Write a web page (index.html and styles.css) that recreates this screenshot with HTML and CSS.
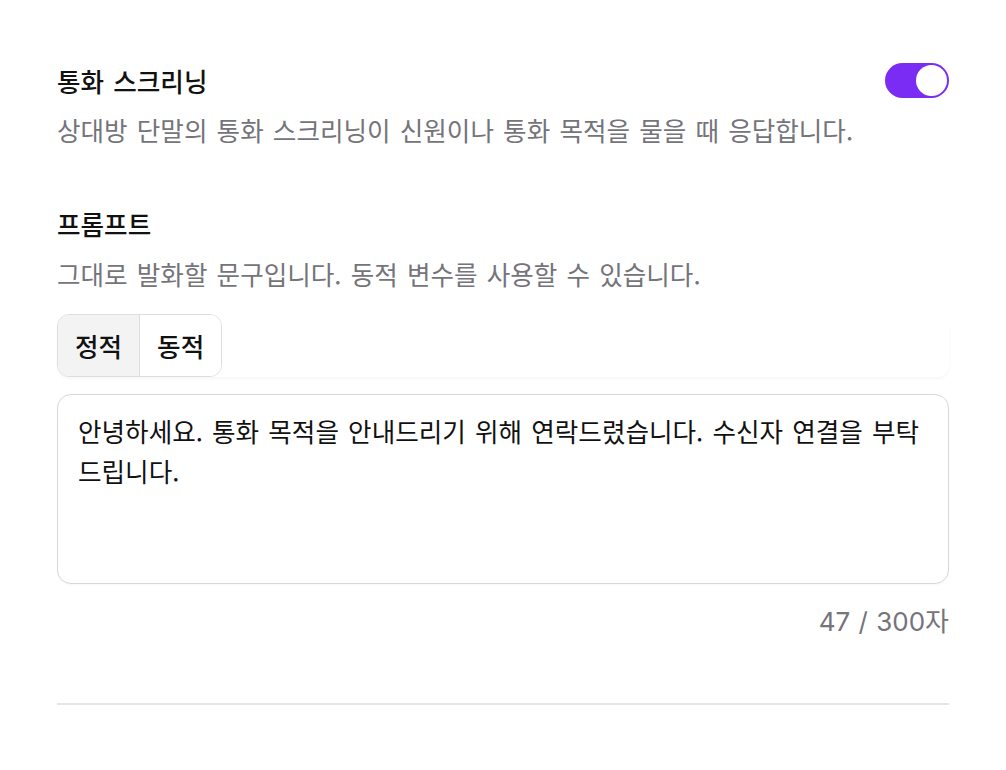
FILE: index.html
```html
<!DOCTYPE html>
<html lang="ko">
<head>
<meta charset="utf-8">
<title>통화 스크리닝</title>
<link rel="stylesheet" href="styles.css">
</head>
<body>
<main class="page">
  <section class="setting">
    <div class="setting-head">
      <h2 class="setting-title">통화 스크리닝</h2>
      <button class="toggle is-on" type="button" aria-pressed="true" aria-label="통화 스크리닝"><span class="toggle-knob"></span></button>
    </div>
    <p class="setting-desc">상대방 단말의 통화 스크리닝이 신원이나 통화 목적을 물을 때 응답합니다.</p>
  </section>

  <section class="prompt">
    <h3 class="prompt-title">프롬프트</h3>
    <p class="prompt-desc">그대로 발화할 문구입니다. 동적 변수를 사용할 수 있습니다.</p>
    <div class="mode-bar">
      <div class="segmented">
        <button class="segment is-active" type="button">정적</button>
        <button class="segment" type="button">동적</button>
      </div>
    </div>
    <textarea class="prompt-input" rows="4">안녕하세요. 통화 목적을 안내드리기 위해 연락드렸습니다. 수신자 연결을 부탁드립니다.</textarea>
    <div class="counter">47 / 300자</div>
  </section>
  <hr class="divider">
</main>
</body>
</html>
```

FILE: styles.css
```css
* { box-sizing: border-box; }

html, body {
  margin: 0;
  background: #ffffff;
}

body {
  font-family: "Noto Sans CJK KR", "Noto Sans", sans-serif;
  color: #111111;
  font-size: 25.6px;
  word-spacing: 2px;
}

.page {
  padding: 63px 57px 0 57px;
}

.setting-head {
  display: flex;
  align-items: center;
  justify-content: space-between;
  height: 35px;
}

.setting-title,
.prompt-title {
  margin: 0;
  font-size: 25.6px;
  font-weight: 500;
  line-height: 34px;
}

.setting-desc,
.prompt-desc {
  margin: 0;
  font-size: 25.6px;
  line-height: 34px;
  color: #74747a;
}

.setting-desc {
  margin-top: 15px;
}

.toggle {
  width: 64px;
  height: 35px;
  border: none;
  padding: 2px;
  border-radius: 18px;
  background: #7b2cf4;
  display: flex;
  align-items: center;
  justify-content: flex-end;
  cursor: pointer;
}

.toggle-knob {
  width: 31px;
  height: 31px;
  border-radius: 50%;
  background: #ffffff;
}

.prompt {
  margin-top: 60px;
}

.prompt-desc {
  margin-top: 16px;
}

.mode-bar {
  margin-top: 23px;
  border-radius: 12px;
  box-shadow: 0 2px 3px rgba(0, 0, 0, 0.035);
  display: flex;
}

.segmented {
  display: flex;
  border: 1.5px solid #dedede;
  border-radius: 12px;
  overflow: hidden;
}

.segment {
  font-family: inherit;
  font-size: 25.6px;
  font-weight: 500;
  line-height: 33px;
  padding: 14px 17px;
  border: none;
  background: #ffffff;
  color: #111111;
  cursor: pointer;
}

.segment + .segment {
  border-left: 1.5px solid #dedede;
}

.segment.is-active {
  background: #f3f3f3;
}

.prompt-input {
  display: block;
  width: 100%;
  height: 190px;
  margin-top: 17px;
  padding: 16px 20px;
  border: 1.5px solid #d8d8d8;
  border-radius: 14px;
  font-family: inherit;
  font-size: 25.6px;
  line-height: 40px;
  word-spacing: 2px;
  color: #111111;
  resize: none;
  outline: none;
  box-shadow: 0 1px 2px rgba(0, 0, 0, 0.03);
}

.counter {
  margin-top: 21px;
  text-align: right;
  font-family: "Inter", "Noto Sans CJK KR", sans-serif;
  font-size: 26px;
  line-height: 34px;
  word-spacing: 1px;
  color: #74747a;
}

.divider {
  margin: 64px 0 0 0;
  border: none;
  border-top: 2px solid #e6e6e6;
}
```
